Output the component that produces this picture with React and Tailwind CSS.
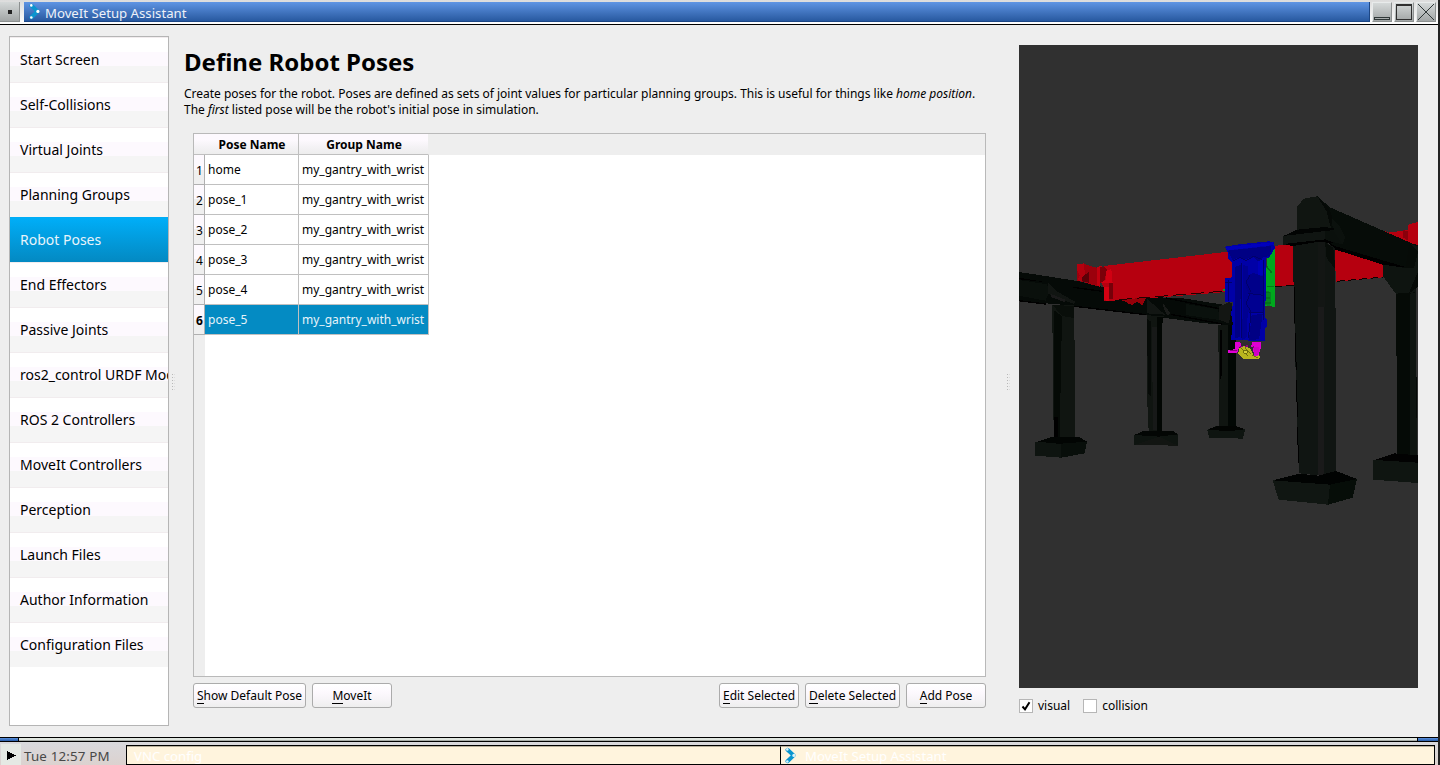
import React from 'react';

const NAV = [
  'Start Screen', 'Self-Collisions', 'Virtual Joints', 'Planning Groups', 'Robot Poses',
  'End Effectors', 'Passive Joints', 'ros2_control URDF Modifications', 'ROS 2 Controllers',
  'MoveIt Controllers', 'Perception', 'Launch Files', 'Author Information', 'Configuration Files',
];
const POSES = ['home', 'pose_1', 'pose_2', 'pose_3', 'pose_4', 'pose_5'];

function MoveItLogo({ link = '#0a95cf', dot = '#ffffff' }) {
  return (
    <svg width="12" height="17" viewBox="0 0 12 17" className="shrink-0">
      <path d="M2.5 2.8 L8.6 8.4 L2.5 14.2" fill="none" stroke={link} strokeWidth="4" strokeLinecap="round" strokeLinejoin="round" />
      <circle cx="2.3" cy="2.4" r="1.3" fill={dot} />
      <circle cx="8.9" cy="8.4" r="1.6" fill={dot} />
      <circle cx="2.3" cy="14.5" r="1.3" fill={dot} />
    </svg>
  );
}

function TitleButton({ children }) {
  return (
    <div className="h-5 w-5 border-t border-l border-t-[#e8ebeb] border-l-[#e8ebeb] border-r border-b border-r-[#8c9090] border-b-[#8c9090] bg-linear-to-b from-[#d5d9d9] to-[#a2a6a6]">
      <svg width="18" height="18" viewBox="0 0 18 18" shapeRendering="crispEdges">{children}</svg>
    </div>
  );
}

function TitleBar() {
  return (
    <div className="flex h-[25px] w-full border-b border-black bg-linear-to-b from-[#dcdcdc] to-white pt-0.5">
      <div className="-ml-px mr-1 h-5 w-[21px] border-r border-b border-[#8c9090] bg-linear-to-b from-[#d5d9d9] to-[#a2a6a6]">
        <svg width="20" height="19" shapeRendering="crispEdges"><rect x="9" y="8" width="4" height="4" fill="#222" /></svg>
      </div>
      <div className="flex h-5 w-[1346px] items-center border-r border-b border-[#1c4685] bg-linear-to-b from-[#5f95e4] to-[#2859a0] pl-[5px]">
        <MoveItLogo />
        <span className="ml-1 mt-0.5 text-[13.2px] leading-5 whitespace-pre text-[#eef1f8]">MoveIt Setup Assistant</span>
      </div>
      <div className="ml-0.5 flex gap-0.5">
        <TitleButton><rect x="1.5" y="14.5" width="15" height="2" fill="none" stroke="#303838" /></TitleButton>
        <TitleButton>
          <rect x="1.5" y="1.5" width="15" height="15" fill="none" stroke="#303030" />
          <rect x="1" y="1" width="16" height="2" fill="#303030" />
        </TitleButton>
        <TitleButton><path d="M1 1 L17 17 M17 1 L1 17" stroke="#303838" /></TitleButton>
      </div>
    </div>
  );
}

function Sidebar() {
  return (
    <div className="h-[690px] w-40 overflow-hidden border border-[#b5b5b5] bg-white text-[14px]">
      {NAV.map((name) => {
        const active = name === 'Robot Poses';
        return (
          <div
            key={name}
            className={
              'flex h-[45px] items-center border-t pb-px pl-2.5 whitespace-nowrap ' +
              (active
                ? 'border-[#00adf5] bg-linear-to-b from-[#00aef8] to-[#0389c2] text-[#e9f4fb]'
                : 'border-[#f1ecee] bg-[linear-gradient(to_bottom,#fff_0,#fff_14px,#fdf9fe_14px,#fdf9fe_28px,#f5f5f5_28px)] text-black')
            }
          >
            {name}
          </div>
        );
      })}
    </div>
  );
}

function Splitter() {
  return (
    <svg width="4" height="16" shapeRendering="crispEdges">
      {[0, 3, 6, 9, 12, 15].map((y) => (
        <g key={y} fill="#b8b8b8"><rect x="0" y={y} width="1" height="1" /><rect x="2" y={y} width="1" height="1" fill="#ddd" /></g>
      ))}
    </svg>
  );
}

const headCell = 'flex items-center justify-center border-b border-r border-b-[#bfbfbf] bg-[linear-gradient(to_bottom,#fdf9fe_0,#fdf9fe_30%,#f4f2f5_65%,#ededed)] pt-0.5 font-bold';

function PoseTable() {
  return (
    <div className="ml-[9px] h-[544px] w-[793px] border border-[#b9b9b9] bg-white text-[12px]">
      <div className="flex h-[21px] bg-[#eeeeee]">
        <div className="w-[11px] border-b border-[#bfbfbf] bg-[linear-gradient(to_bottom,#fdf9fe_0,#fdf9fe_30%,#f4f2f5_65%,#ededed)]" />
        <div className={headCell + ' w-[94px] border-r-[#bfbfbf] pl-px'}>Pose Name</div>
        <div className={headCell + ' w-[130px] border-r-[#eee] pl-px'}>Group Name</div>
      </div>
      <div className="flex h-[521px]">
        <div className="w-[11px] bg-[#eeeeee]">
          {POSES.map((pose, i) => (
            <div
              key={pose}
              className={
                'flex h-[30px] items-center justify-center border-r border-b border-[#b0b0b0] bg-[linear-gradient(to_bottom,#fdf9fe_0,#fdf9fe_50%,#efefef_50%)] pt-0.5 pl-px ' +
                (i === 5 ? 'font-bold' : '')
              }
            >
              {i + 1}
            </div>
          ))}
        </div>
        <div>
          {POSES.map((pose, i) => (
            <div key={pose} className={'flex h-[30px] ' + (i === 5 ? 'bg-[#048bc3] text-[#e6f3fa]' : 'text-black')}>
              <div className="flex w-[94px] items-center border-r border-b border-[#c0c0c0] pl-[3px]">{pose}</div>
              <div className="flex w-[130px] items-center border-r border-b border-[#c0c0c0] pl-[3px]">my_gantry_with_wrist</div>
            </div>
          ))}
        </div>
      </div>
    </div>
  );
}

function Button({ label, width }) {
  return (
    <div className={'flex h-[25px] items-center justify-center rounded-[3px] border border-[#ababab] bg-[linear-gradient(to_bottom,#fff_0,#fdf9fe_35%,#f8f5f9_60%,#eeeeee)] pt-px text-[12px] whitespace-pre ' + width}>
      <span className="border-b border-black leading-[15px]">{label[0]}</span>
      <span className="border-b border-transparent leading-[15px]">{label.slice(1)}</span>
    </div>
  );
}

function MainPanel() {
  return (
    <div className="w-[802px] text-black">
      <h1 className="mt-2 h-9 text-[24px] leading-9 font-bold whitespace-nowrap">Define Robot Poses</h1>
      <div className="mt-1.5 h-8 text-[12px] leading-4 tracking-[-0.01px] whitespace-nowrap">
        <p>Create poses for the robot. Poses are defined as sets of joint values for particular planning groups. This is useful for things like <i>home position</i>.</p>
        <p>The <i>first</i> listed pose will be the robot's initial pose in simulation.</p>
      </div>
      <div className="mt-[15px]"><PoseTable /></div>
      <div className="mt-1.5 ml-[9px] flex gap-1.5">
        <Button label="Show Default Pose" width="w-[113px]" />
        <Button label="MoveIt" width="w-20" />
        <div className="flex-1" />
        <Button label="Edit Selected" width="w-20" />
        <Button label="Delete Selected" width="w-[95px]" />
        <Button label="Add Pose" width="w-20" />
      </div>
    </div>
  );
}

function GantryScene() {
  return (
    <svg width="399" height="643" viewBox="1019 45 399 643" shapeRendering="crispEdges" className="block bg-[#303030]">
      {/* far rail and its three columns */}
      <g transform="translate(1019 180) scale(.33333)">
        <polygon points="0,276 80,288 180,304 255,322 380,352 480,353 630,377 650,380 650,437 560,430 380,406 165,377 80,370 0,360" fill="#050a07" />
        <polygon points="0,300 85,313 88,340 80,362 0,347" fill="#0a100c" />
        <polygon points="0,293 90,308 0,298" fill="#000" />
        <path d="M162 322 L250 334 M440 354 L600 386 M0 362 L80 372 M160 378 L380 404 M455 403 L610 432" stroke="#000" strokeWidth="4" />
        <polygon points="88,308 115,335 170,366 165,372 135,362 88,342" fill="#111512" />
        <polygon points="95,342 137,358 137,366 95,351" fill="#1a1a1a" />
        <polygon points="384,356 420,388 438,404 384,400" fill="#121613" />
        <polygon points="432,370 455,400 445,406 434,386" fill="#191b19" />
        <polygon points="500,372 598,388 600,420 500,405" fill="#0a110d" />

        <polygon points="100,375 166,375 168,770 106,770 102,688" fill="#101511" />
        <polygon points="106,392 129,408 122,770 106,770" fill="#050a06" />
        <polygon points="100,375 166,378 166,414 130,408" fill="#090e0a" />
        <polygon points="106,710 117,710 117,773 106,773" fill="#000" />
        <polygon points="48,787 98,771 180,771 204,785 197,820 127,833 48,827" fill="#0e1410" />
        <polygon points="56,785 98,771 180,771 204,785 127,792" fill="#020503" />
        <polygon points="127,791 204,785 197,820 127,833" fill="#080e0a" />

        <polygon points="383,406 434,408 429,430 429,753 389,753 384,650" fill="#101511" />
        <polygon points="415,410 434,410 429,440 429,753 415,753" fill="#020603" />
        <polygon points="383,415 396,425 396,650 388,640" fill="#060a07" />
        <polygon points="400,440 415,440 415,750 401,750" fill="#171918" />
        <polygon points="346,765 370,754 461,752 477,763 477,797 346,795" fill="#0e1410" />
        <polygon points="346,765 370,754 461,752 477,763 420,770" fill="#030604" />
        <polygon points="420,770 477,797 348,795" fill="#121512" />

        <polygon points="598,436 651,436 651,742 600,740" fill="#101511" />
        <polygon points="628,436 651,436 651,742 628,740" fill="#020704" />
        <polygon points="604,450 609,450 609,585 604,600" fill="#000" />
        <polygon points="600,380 630,366 640,372 630,430 600,420" fill="#131613" />
        <polygon points="565,750 588,739 651,739 678,748 672,776 570,773" fill="#0e1410" />
        <polygon points="565,748 592,739 651,739 678,748 625,754" fill="#020402" />
      </g>

      {/* red cross beam */}
      <g transform="translate(1019 180) scale(.33333)">
        <polygon points="174,253 195,250 210,257 235,264 235,319 190,305 175,303" fill="#9b000c" />
        <polygon points="174,253 195,250 198,288 190,303 176,301 182,287 174,270" fill="#b3000e" />
        <polygon points="190,290 209,276 209,308 188,304" fill="#5d0007" />
        <polygon points="235,262 245,257 252,262 242,320 235,318" fill="#c0000f" />
        <polygon points="244,262 277,257 277,310 244,308" fill="#7b0009" />
        <polygon points="254,258 620,216 722,205 722,328 350,358 280,362 255,363 255,322 246,307 256,302 264,270" fill="#b6000f" />
        <polygon points="263,270 277,268 281,310 248,308 260,300" fill="#d00012" />
        <polygon points="255,320 269,320 269,362 255,361" fill="#d40012" />
        <polygon points="269,308 281,308 281,358 269,358" fill="#750009" />
        <polygon points="300,359 381,353 370,377 360,368 352,366 342,374 330,373 318,364" fill="#950009" />
        <path d="M300 359 L620 333" stroke="#200" strokeWidth="3" strokeDasharray="40 14" />
      </g>
      <g transform="translate(1210 180) scale(.33333)">
        <polygon points="193,197 260,194 260,315 193,322" fill="#b6000f" />
        <polygon points="373,195 624,126 624,286 520,292 378,305" fill="#b6000f" />
        <polygon points="373,80 624,80 624,126 594,128 594,150 535,158" fill="#303030" />
        <polygon points="578,150 595,154 595,182 578,172" fill="#8a000b" />
        <path d="M193 320 L260 316 M380 304 L520 291" stroke="#100" strokeWidth="3" strokeDasharray="24 10" />
      </g>

      {/* near rail and columns */}
      <g transform="translate(1210 180) scale(.33333)">
        <polygon points="322,49 360,82 610,192 624,195 624,320 592,270 520,250 374,202 345,180" fill="#060c08" />
        <polygon points="345,180 374,198 586,261 550,264 374,208" fill="#000" />
        <polygon points="262,80 281,56 322,49 350,95 363,145 345,150 262,153" fill="#101511" />
        <polygon points="322,49 357,85 367,112 363,145 350,95" fill="#050906" />
        <polygon points="366,115 387,136 406,172 398,193 345,181 345,150 368,143" fill="#0b110d" />
        <polygon points="220,168 262,149 345,141 380,147 345,155 220,173" fill="#020403" />
        <polygon points="220,168 346,153 346,180 220,196" fill="#101512" />
        <polygon points="346,153 370,151 398,193 346,180" fill="#0a100c" />
        <polygon points="220,192 346,178 370,188 250,199" fill="#000" />
        <polygon points="248,198 323,186 345,186 376,204 378,878 325,886 267,880 258,620" fill="#101512" />
        <polygon points="345,186 370,204 376,268 350,235" fill="#070c08" />
        <polygon points="323,380 342,380 342,886 323,886" fill="#1a1a1a" />
        <polygon points="323,186 345,186 345,380 323,380" fill="#131614" />
        <path d="M252 320 L260 620 L266 880" fill="none" stroke="#000" strokeWidth="3" strokeDasharray="110 30" />
        <polygon points="188,901 268,881 325,887 378,873 441,897 428,953 354,974 206,959" fill="#101612" />
        <polygon points="188,901 268,881 325,887 378,873 441,897 360,914" fill="#010302" />
        <polygon points="360,914 441,897 428,953 354,974" fill="#060d08" />

        <polygon points="520,254 586,264 598,190 624,200 624,280 618,336 598,342 557,341 520,290" fill="#0e1410" />
        <polygon points="598,190 624,216 612,264 586,264" fill="#060b07" />
        <polygon points="618,288 624,275 624,320 596,341" fill="#050906" />
        <polygon points="558,341 618,337 621,826 562,822" fill="#050a06" />
        <polygon points="600,341 618,337 620,826 600,826" fill="#0e1410" />
        <polygon points="489,842 553,820 624,826 624,909 489,899" fill="#0f1511" />
        <polygon points="494,840 553,820 624,826 624,848" fill="#020202" />
      </g>

      {/* carriage, tool head and wrist */}
      <g transform="translate(1215 230) scale(.33333)">
        <polygon points="158,70 179,52 180,230 143,228 143,180 150,173" fill="#00a91e" />
        <polygon points="144,178 168,187 166,227 145,226" fill="#078521" />
        <path d="M148 188h18M145 205h20M150 219h18M155 110l15 18M157 170h20" stroke="#05751a" strokeWidth="5" />
        <path d="M25 180h35M50 145v12" stroke="#00a91e" strokeWidth="5" />
        <polygon points="30,50 80,42 160,34 178,36 179,55 163,82 153,85 151,265 156,268 155,290 149,298 149,333 48,330 53,280 48,250 55,217 29,215 30,145 52,142 52,100 40,88 38,66" fill="#0000a7" />
        <polygon points="38,62 150,50 170,47 164,78 144,82 135,98 115,82 90,88 72,82 52,90" fill="#000084" />
        <polygon points="32,51 175,37 176,45 36,61" fill="#0000bd" />
        <polygon points="61,110 78,105 75,320 60,326" fill="#000083" />
        <polygon points="84,105 99,110 97,320 82,330" fill="#000091" />
        <polygon points="99,137 115,128 145,140 146,195 100,189 92,172" fill="#00008a" />
        <polygon points="98,198 108,191 147,198 145,248 101,246 93,225" fill="#000091" />
        <polygon points="110,255 143,252 132,328 102,330" fill="#000084" />
        <polygon points="129,95 145,85 151,133 130,135" fill="#0000b9" />
        <path d="M79 100V325M105 135L93 157L107 185M105 190L94 220L108 247M108 250L100 325M147 90V270M42 150V214M31 158H52M55 93L75 82L93 92L116 79L142 88M100 190L146 196M101 247L145 249" fill="none" stroke="#00006b" strokeWidth="3" />
        <path d="M59 335H137V356L130 377H118L112 350H100L74 349L66 370H40V360L60 358Z" fill="#e000d3" />
        <polygon points="76,337 112,337 108,352 81,354" fill="#302b30" />
        <path d="M115 350L132 365M74 351L98 348M45 362H66" stroke="#89007f" strokeWidth="4" />
        <polygon points="72,355 86,348 104,354 112,367 118,380 130,376 136,382 128,388 88,388 77,379 70,370" fill="#b9b51e" />
        <path d="M79 355L100 379M90 352L108 373M112 375L128 384" stroke="#706e0c" strokeWidth="3" />
        <circle cx="91" cy="366" r="6" fill="#d6d13b" stroke="#706e0c" strokeWidth="3" />
        <polygon points="117,350 132,350 130,375 116,377" fill="#d000c2" />
      </g>
    </svg>
  );
}

function CheckBox({ label, checked }) {
  return (
    <div className="flex items-center gap-[5px]">
      <div className="h-3.5 w-3.5 border border-[#b6b6b6] bg-white">
        {checked && (
          <svg width="12" height="12" viewBox="0 0 12 12"><path d="M2.5 6.5 L5 9.3 L9.5 2.3" fill="none" stroke="#000" strokeWidth="2" /></svg>
        )}
      </div>
      <span>{label}</span>
    </div>
  );
}

function TaskBar() {
  return (
    <div className="w-[1438px]">
      <div className="flex h-[5px] border-y border-black bg-[#dfe5df]">
        <div className="w-[19px] border-r border-black bg-linear-to-b from-[#5a91df] to-[#285ba5]" />
        <div className="flex-1 border-b border-[#a7aba7]" />
        <div className="w-[21px] border-l border-black bg-linear-to-b from-[#5a91df] to-[#285ba5]" />
      </div>
      <div className="flex h-[23px] bg-linear-to-b from-[#d9d9dd] to-[#dcd2cf]">
        <div className="mt-0.5 ml-px flex h-[21px] w-5 items-center bg-[#e5e9e4]">
          <svg width="20" height="20" shapeRendering="crispEdges"><path d="M6 6 L15 10.5 L6 15Z" fill="#000" /></svg>
        </div>
        <div className="ml-[3px] mt-1 w-[102px] text-[13.33px] leading-5 tracking-[0.17px] whitespace-pre text-[#484848]">Tue 12:57 PM</div>
        <div className="mt-[3px] flex h-5 w-[1309px] border border-black bg-[#fff4dd] text-[13.2px] leading-[18px] whitespace-pre text-white">
          <div className="w-[654px] border-t border-r border-t-[#b8b09c] border-r-black pl-[7px]">VNC config</div>
          <div className="flex flex-1 border-t border-[#b8b09c] pl-1">
            <MoveItLogo dot="#d8f2fc" />
            <span className="ml-2">MoveIt Setup Assistant</span>
          </div>
        </div>
      </div>
    </div>
  );
}

export default function App() {
  return (
    <div className="flex h-[765px] w-[1440px] overflow-hidden bg-[#222222] font-['Noto_Sans',sans-serif]">
      <div className="flex w-[1438px] flex-col bg-[#eeeeee]">
        <TitleBar />
        <div className="flex h-[712px] pt-[11px] pl-[9px]">
          <Sidebar />
          <div className="mt-[338px] ml-[3px] w-3"><Splitter /></div>
          <MainPanel />
          <div className="mt-[338px] ml-[21px] w-3"><Splitter /></div>
          <div className="mt-[9px] w-[399px] text-[12px]">
            <GantryScene />
            <div className="mt-[9px] flex gap-[13px]">
              <CheckBox label="visual" checked />
              <CheckBox label="collision" />
            </div>
          </div>
        </div>
        <TaskBar />
      </div>
    </div>
  );
}
